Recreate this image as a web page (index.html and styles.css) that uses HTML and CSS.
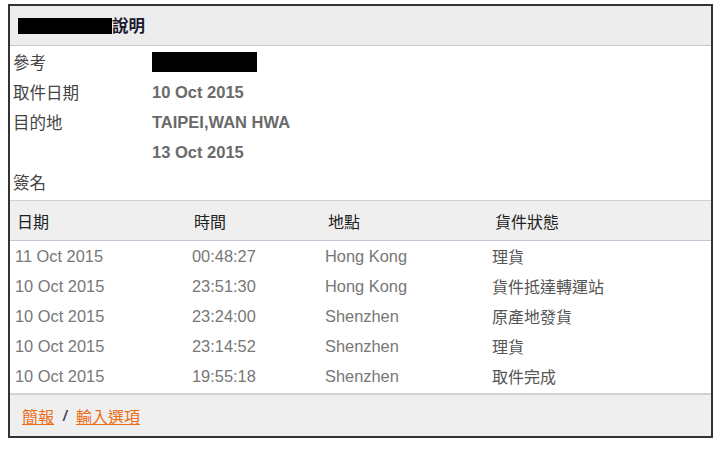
FILE: index.html
```html
<!DOCTYPE html>
<html lang="zh-Hant">
<head>
<meta charset="utf-8">
<link rel="stylesheet" href="styles.css">
</head>
<body>
<div class="box">
  <div class="head"><span class="redact redact-title"></span><span class="title">說明</span></div>
  <div class="info">
    <div class="row"><span class="label">參考</span><span class="val"><span class="redact redact-ref"></span></span></div>
    <div class="row"><span class="label">取件日期</span><span class="val">10 Oct 2015</span></div>
    <div class="row"><span class="label">目的地</span><span class="val">TAIPEI,WAN HWA</span></div>
    <div class="row"><span class="label"></span><span class="val">13 Oct 2015</span></div>
    <div class="row"><span class="label">簽名</span><span class="val"></span></div>
  </div>
  <table class="events">
    <thead>
      <tr><th class="c-date">日期</th><th class="c-time">時間</th><th class="c-place">地點</th><th class="c-status">貨件狀態</th></tr>
    </thead>
    <tbody>
      <tr><td>11 Oct 2015</td><td>00:48:27</td><td>Hong Kong</td><td>理貨</td></tr>
      <tr><td>10 Oct 2015</td><td>23:51:30</td><td>Hong Kong</td><td>貨件抵達轉運站</td></tr>
      <tr><td>10 Oct 2015</td><td>23:24:00</td><td>Shenzhen</td><td>原產地發貨</td></tr>
      <tr><td>10 Oct 2015</td><td>23:14:52</td><td>Shenzhen</td><td>理貨</td></tr>
      <tr><td>10 Oct 2015</td><td>19:55:18</td><td>Shenzhen</td><td>取件完成</td></tr>
    </tbody>
  </table>
  <div class="foot"><a href="#" class="link">簡報</a><span class="sep">/</span><a href="#" class="link">輸入選項</a></div>
</div>
</body>
</html>
```
FILE: styles.css
```css
html, body {
  margin: 0;
  padding: 0;
  background: #fff;
}
body {
  font-family: "Liberation Sans", Arial, "Noto Sans CJK TC", sans-serif;
  font-size: 16px;
  color: #333;
}
.box {
  margin: 4px 0 0 8px;
  width: 701px;
  height: 430px;
  border: 2px solid #333;
  display: flex;
  flex-direction: column;
}
.head {
  height: 39px;
  background: #ededed;
  border-bottom: 1px solid #c8c8c8;
  display: flex;
  align-items: center;
  padding-left: 8px;
}
.redact {
  display: inline-block;
  background: #000;
}
.redact-title {
  width: 94px;
  height: 16px;
}
.title {
  font-weight: bold;
  color: #1c1a33;
  font-size: 16.5px;
  font-family: "Noto Sans CJK TC", sans-serif;
  line-height: 1;
}
.info {
  padding: 1px 0 3px;
}
.row {
  display: flex;
  height: 30px;
  align-items: center;
}
.label {
  width: 139px;
  padding-left: 3px;
  color: #444;
  font-family: "Noto Sans CJK TC", sans-serif;
  font-size: 16.5px;
  line-height: 1;
}
.val {
  font-weight: bold;
  color: #6a6a6a;
  font-size: 16.5px;
  line-height: 1;
}
.redact-ref {
  width: 105px;
  height: 20px;
  vertical-align: middle;
}
.events {
  border-collapse: collapse;
  width: 100%;
  table-layout: fixed;
}
.events thead tr {
  background: #efefef;
  border-top: 1px solid #d0d0d0;
  border-bottom: 1px solid #c9c2d4;
}
.events th {
  height: 39px;
  text-align: left;
  font-weight: normal;
  color: #222;
  font-family: "Noto Sans CJK TC", sans-serif;
  font-size: 16px;
  line-height: 1;
  padding: 0 0 0 3px;
}
.events th.c-date { width: 175px; padding-left: 7px; }
.events th.c-time { width: 131px; padding-left: 2px; }
.events th.c-place { width: 164px; padding-left: 3px; }
.events td {
  height: 30px;
  padding: 0;
  color: #777;
  font-size: 16.4px;
  line-height: 1;
  font-family: "Liberation Sans", Arial, "Noto Sans CJK TC", sans-serif;
}
.events td:nth-child(1) { padding-left: 5px; }
.events td:nth-child(4) {
  color: #555;
  font-family: "Noto Sans CJK TC", sans-serif;
  font-size: 16px;
}
.foot {
  flex: 1;
  background: #efefef;
  border-top: 2px solid #d2d2d2;
  margin-top: 2px;
  display: flex;
  align-items: center;
  padding-left: 12px;
  font-family: "Noto Sans CJK TC", sans-serif;
  font-size: 16px;
}
.link {
  color: #ec6d16;
  text-decoration: underline;
}
.sep {
  color: #34405a;
  font-style: italic;
  font-weight: bold;
  margin: 0 9px 0 9px;
  font-family: "Liberation Sans", Arial, sans-serif;
  font-size: 14px;
}
```
